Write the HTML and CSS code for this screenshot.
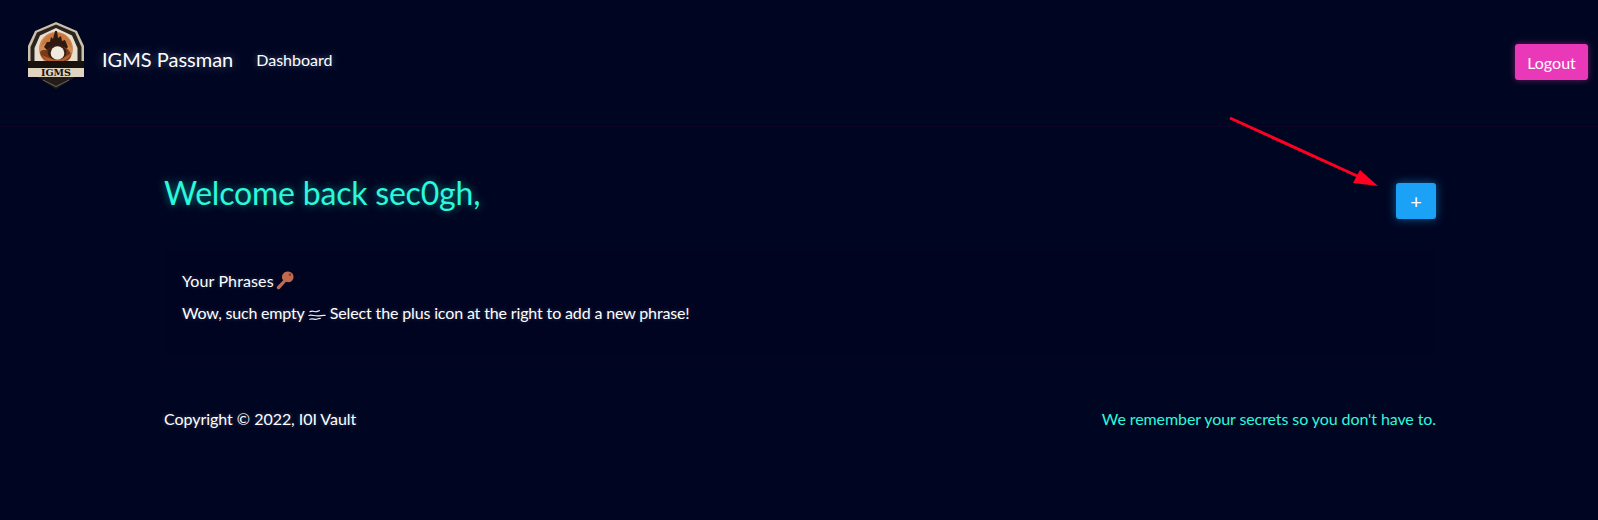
FILE: index.html
```html
<!DOCTYPE html>
<html lang="en">
<head>
<meta charset="utf-8">
<title>IGMS Passman</title>
<link rel="stylesheet" href="styles.css">
</head>
<body>
<nav class="nav">
  <div class="nav-left">
    <svg class="logo" viewBox="0 0 58 68" width="58" height="68" aria-label="IGMS logo">
      <path d="M29 0 L50 9 L57 24 V46 H1 V24 L8 9 Z" fill="#cdbfaa"/>
      <path d="M29 2.500 L48 10.500 L54.500 25 V46 H3.500 V25 L10 10.500 Z" fill="#2a241f"/>
      <path d="M29 6 L45 13.500 L50.500 26 V42 H7.500 V26 L13 13.500 Z" fill="#e9dfd0"/>
      <circle cx="29" cy="27" r="17" fill="#d08a55"/>
      <path d="M14 25 C15 17 22 11 30 11 C40 11 44 18 45 27 C42 22 38 20 30 20 C22 20 17 21 14 25 Z" fill="#c9783f"/>
      <path d="M17 25 L20 20 L23 20 L24 15 L26 17 L28 9 L30 9 L31 16 L34 14 L35 19 L38 18 L41 25 L36 30 H22 Z" fill="#2f1a12"/>
      <path d="M13 30 C16 26 20 30 22 26 C30 22 40 24 43 30 C46 36 42 40 29 40 C18 40 14 36 13 30 Z" fill="#7a3a18"/>
      <path d="M15 33 C22 38 37 39 45 30 C43 38 34 41 27 40 C21 40 17 37 15 33 Z" fill="#b4602e"/>
      <ellipse cx="30" cy="30.500" rx="9.500" ry="7.500" fill="#3a2013"/>
      <circle cx="30.500" cy="31" r="6.800" fill="#f1eadf"/>
      <rect x="1" y="39" width="56" height="7" fill="#17120e"/>
      <rect x="1" y="46" width="56" height="9" fill="#e0d3bf"/>
      <text x="29" y="54" class="logo-text" text-anchor="middle">IGMS</text>
      <path d="M10 55 H48 L29 67 Z" fill="#231d19"/>
      <path d="M16 58 L29 64.500 L42 58" fill="none" stroke="#6e6257" stroke-width="1"/>
    </svg>
    <a class="brand" href="#">IGMS Passman</a>
    <a class="nav-link" href="#">Dashboard</a>
  </div>
  <button class="btn btn-logout">Logout</button>
</nav>

<main class="content">
  <header class="welcome">
    <h1 class="title">Welcome back sec0gh,</h1>
    <button class="btn btn-add">+</button>
  </header>
  <section class="card">
    <p class="line"><span class="phrases">Your Phrases</span> <svg class="key" viewBox="0 0 20 21" width="18" height="19"><path d="M13.500 0.500a6 6 0 0 1 0 12c-.9 0-1.700-.2-2.400-.5L4.300 19.600c-.8.800-2 .9-2.900.100-.8-.8-.8-2 0-2.800L8 10.200A6 6 0 0 1 13.500 0.500z" fill="#c1694f"/><circle cx="15.500" cy="4" r="1.300" fill="#7c3323"/></svg></p>
    <p class="line"><span class="wow">Wow, such empty</span> <svg class="fog" viewBox="0 0 19 14" width="18" height="14"><path d="M2 3.500c3-1.500 5 .5 7 0s2-1 3-1M1 7.500c3-1 5 .5 9 .5s5-1 8-.5M2 11.500c3-1 5 .5 7 0s2-1 4-1" fill="none" stroke="#f0f2f8" stroke-width="1.300" stroke-linecap="round"/></svg> <span class="select">Select the plus icon at the right to add a new phrase!</span></p>
  </section>
  <footer class="footer">
    <span class="copy">Copyright © 2022, I0I Vault</span>
    <span class="tagline">We remember your secrets so you don't have to.</span>
  </footer>
</main>

<svg class="arrow" viewBox="0 0 1598 520" width="1598" height="520" aria-hidden="true">
  <line x1="1230" y1="118" x2="1366" y2="180" stroke="#ff0022" stroke-width="3"/>
  <path d="M1378 186 L1353 183 L1360 170 Z" fill="#ff0022"/>
</svg>
</body>
</html>
```
FILE: styles.css
```css
* { box-sizing: border-box; }
html, body { margin: 0; height: 100%; }
body {
  background: #000622;
  color: #fff;
  font-family: Lato, "Noto Sans", sans-serif;
  font-size: 16px;
  overflow: hidden;
  position: relative;
  min-height: 520px;
}
.nav {
  height: 127px;
  padding: 44px 10px 0 27px;
  display: flex;
  justify-content: space-between;
  align-items: flex-start;
  border-bottom: 1px solid #0e0529;
}
.nav-left { display: flex; align-items: center; margin-top: -22px; }
.logo { display: block; }
.logo-text { font: 700 9.500px "DejaVu Serif", serif; fill: #17110d; }
.brand {
  color: #fff;
  text-decoration: none;
  font-size: 20px;
  margin: 6px 0 0 17px;
  text-shadow: 0 0 8px rgba(190, 215, 255, .45);
}
.nav-link {
  color: #fff;
  text-decoration: none;
  font-size: 16px;
  margin: 6px 0 0 23px;
  text-shadow: 0 0 6px rgba(190, 215, 255, .45);
}
.btn {
  border: 0;
  color: #fff;
  font-family: inherit;
  border-radius: 3px;
  padding: 0;
}
.btn-logout {
  width: 73px;
  height: 36px;
  font-size: 16px;
  background: #ea39b8;
  box-shadow: 0 0 6px rgba(234, 57, 184, .45);
}
.content { width: 1272px; margin-left: 164px; }
.welcome {
  height: 123px;
  padding-top: 46px;
  display: flex;
  justify-content: space-between;
  align-items: flex-start;
}
.title {
  margin: 0;
  font-size: 32px;
  line-height: 40px;
  font-weight: 400;
  letter-spacing: -.2px;
  color: #2cf8dc;
  text-shadow: 0 0 8px rgba(27, 245, 214, .5);
}
.btn-add {
  width: 40px;
  height: 36px;
  margin-top: 10px;
  font-size: 20px;
  background: #1ba2f6;
  box-shadow: 0 0 10px rgba(27, 162, 246, .55);
}
.card {
  height: 105px;
  padding: 19px 18px 0;
  background: #000420;
}
.line {
  margin: 0 0 8px;
  line-height: 24px;
  font-size: 16px;
  text-shadow: 0 0 4px rgba(190, 215, 255, .3);
}
.phrases { letter-spacing: .12px; }
.wow { letter-spacing: -.2px; }
.select { letter-spacing: -.14px; }
.key { vertical-align: -3px; margin-left: -2px; }
.fog { vertical-align: -3px; margin-left: -1px; }
.footer {
  display: flex;
  justify-content: space-between;
  margin-top: 52px;
  line-height: 24px;
  font-size: 16px;
  text-shadow: 0 0 4px rgba(190, 215, 255, .3);
}
.copy { letter-spacing: -.04px; }
.tagline { color: #2cf8dc; text-shadow: none; letter-spacing: -.09px; }
.arrow { position: absolute; left: 0; top: 0; pointer-events: none; }
```
